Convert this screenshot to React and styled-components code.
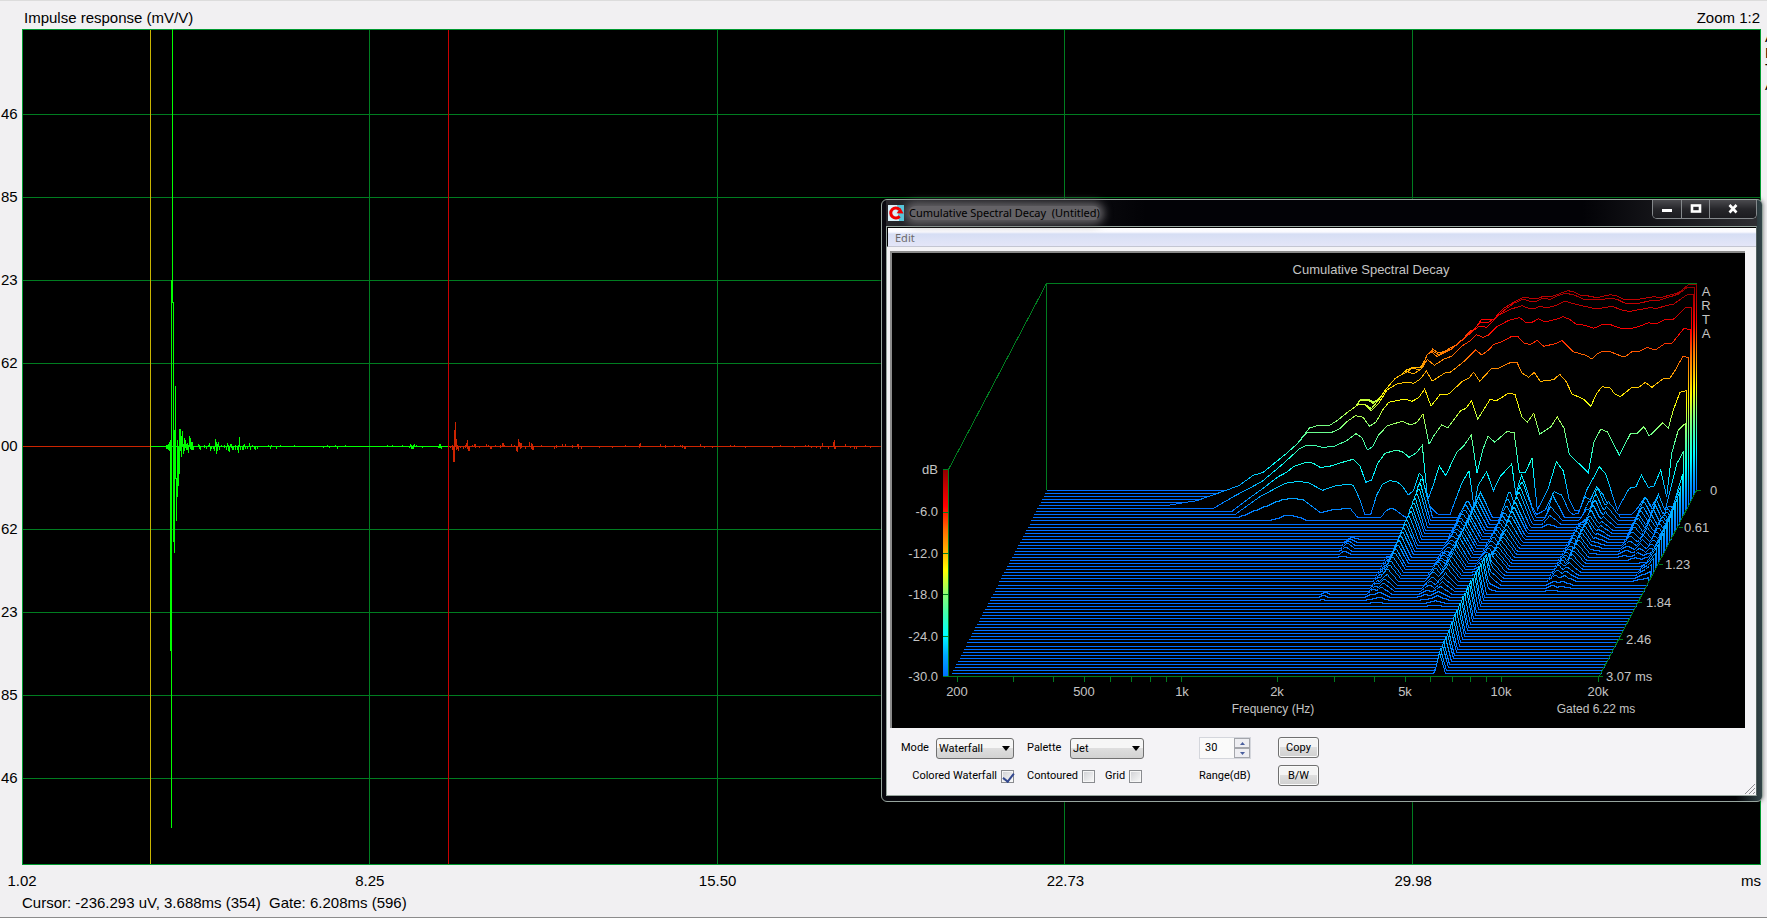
import React from 'react';
import styled, { createGlobalStyle } from 'styled-components';

const GlobalStyle = createGlobalStyle`
  * {
    box-sizing: border-box;
  }
  body {
    margin: 0;
    background-color: #f1f0f2;
    color: #000;
    font-family: "Liberation Sans", Arial, sans-serif;
    font-size: 15px;
    line-height: 18px;
  }
`;

const Page = styled.main`
  position: relative;
  display: grid;
  grid-template-columns: 22px 1fr 6px;
  grid-template-rows: 28px 1fr 26px 26px;
  min-height: 100vh;
  border-top: 1px solid #dcdcdc;
  border-bottom: 1px solid #8c8c8c;
  overflow: hidden;
`;

const Header = styled.header`
  grid-column: 2;
  display: flex;
  justify-content: space-between;
  align-items: center;
  padding: 5px 1px 0 2px;
`;

const LevelAxis = styled.div`
  grid-column: 1;
  grid-row: 2;
  display: flex;
  flex-direction: column;
  padding: 43px 0 46px 1px;
  span {
    flex: 1;
    display: flex;
    align-items: center;
  }
`;

const PlotArea = styled.div`
  grid-column: 2;
  grid-row: 2;
  display: flex;
  background-color: #000;
  svg {
    flex: 1;
    width: 100%;
    height: 100%;
  }
`;

const SideMark = styled.div`
  grid-column: 3;
  grid-row: 2;
  overflow: hidden;
  padding: 0 0 0 4px;
  line-height: 16px;
  span {
    display: block;
  }
`;

const TimeAxis = styled.div`
  grid-column: 2;
  grid-row: 3;
  display: flex;
  justify-content: space-between;
  align-items: center;
  padding-top: 6px;
`;

const TimeTick = styled.span`
  width: 0;
  display: flex;
  justify-content: ${props => props.last ? 'flex-end' : 'center'};
`;

const Status = styled.footer`
  grid-column: 2 / 4;
  grid-row: 4;
  padding-top: 3px;
  white-space: pre;
`;

const Window = styled.section`
  position: absolute;
  top: 198px;
  right: 4px;
  width: 882px;
  padding: 0 5px 5px 4px;
  border: 1px solid #97a59e;
  border-radius: 6px;
  background: linear-gradient(90deg, #08080e 0%, #020206 97%, #34464a 100%);
  box-shadow: 0 0 4px rgba(0, 0, 0, .5);
  font-family: Roboto, "Noto Sans", sans-serif;
  font-size: 11px;
  line-height: 14px;
`;

const TitleBar = styled.header`
  display: flex;
  align-items: flex-start;
  height: 26px;
  background: linear-gradient(90deg, #26262a 0, #020206 260px, #020206 80%, #2e2e32 100%);
`;

const AppIcon = styled.svg`
  position: relative;
  width: 16px;
  height: 16px;
  margin: 5px 0 0 2px;
`;

const WindowTitle = styled.h1`
  margin: 6px auto 0 5px;
  border-radius: 6px;
  background-color: #646266;
  box-shadow: 0 0 8px 4px #646266;
  color: #000;
  font-family: "Noto Sans", "Open Sans", sans-serif;
  font-size: 11px;
  font-weight: 400;
  line-height: 14px;
  white-space: pre;
`;

const Caption = styled.div`
  display: flex;
  height: 19px;
  border: 1px solid #85898c;
  border-top: none;
  border-radius: 0 0 5px 5px;
  overflow: hidden;
`;

const CaptionButton = styled.button`
  width: ${props => props.wide ? '47px' : '28px'};
  padding: 0;
  border: none;
  border-left: ${props => props.first ? 'none' : '1px solid #85898c'};
  background: linear-gradient(#4a4a4e, #26262a 50%, #1c1c20);
  svg {
    display: block;
    margin: 0 auto;
  }
`;

const Client = styled.div`
  border: 1px solid #97a59e;
  border-right-color: #52605e;
  background-color: #f4f3f6;
`;

const MenuBar = styled.nav`
  height: 20px;
  padding: 1px 7px 0;
  border: 1px solid #000;
  border-width: 1px 0 0 1px;
  border-bottom: 1px solid #c4c6d2;
  background: linear-gradient(#fff 0, #fafaff 4px, #d6def4 6px, #e4e6f8 100%);
`;

const MenuButton = styled.button`
  display: block;
  padding: 0;
  border: none;
  background: none;
  color: #6c6a6c;
  font-family: "Noto Sans", "Open Sans", sans-serif;
  font-size: 11px;
  line-height: 18px;
`;

const ChartFrame = styled.div`
  display: flex;
  margin: 4px 11px 0 3px;
  border: 2px solid #8a8a8a;
  border-width: 2px 0 0 2px;
  background-color: #000;
  svg {
    flex: 1;
    min-width: 0;
    height: auto;
  }
`;

const Panel = styled.form`
  display: grid;
  grid-template-columns: 126px 172px 79px 41px;
  grid-auto-rows: 22px;
  row-gap: 6px;
  padding: 9px 14px 8px;
  color: #000;
`;

const Cell = styled.div`
  display: flex;
  align-items: center;
  gap: ${props => props.gap || '4px'};
  width: ${props => props.width || 'auto'};
  justify-content: ${props => props.align || 'flex-start'};
  label {
    white-space: nowrap;
  }
`;

const SelectBox = styled.span`
  position: relative;
  display: block;
  width: ${props => props.width};
  select {
    width: 100%;
    height: 21px;
    padding: 0 2px;
    appearance: none;
    border: 1px solid #707070;
    border-radius: 3px;
    background: linear-gradient(#f6f6f6 45%, #dedede 50%, #d2d2d2);
    color: #000;
    font-family: inherit;
    font-size: 11px;
  }
  svg {
    position: absolute;
    right: 4px;
    top: 8px;
    pointer-events: none;
  }
`;

const CheckBox = styled.input`
  position: relative;
  appearance: none;
  width: 13px;
  height: 13px;
  margin: 0;
  border: 1px solid #8a8c90;
  background: linear-gradient(135deg, #cfd0d4, #fafafa);
  box-shadow: inset 0 0 0 1px #f6f6f6;
  &:checked::after {
    content: '';
    position: absolute;
    left: 3px;
    top: 0;
    width: 5px;
    height: 9px;
    border: solid #32478e;
    border-width: 0 2px 2px 0;
    transform: rotate(38deg);
  }
`;

const Spinner = styled.div`
  display: flex;
  width: 52px;
  height: 22px;
  border: 1px solid #d4d6dc;
  background-color: #fafafa;
  input {
    width: 34px;
    padding: 0 0 2px 5px;
    border: none;
    background: none;
    font-family: inherit;
    font-size: 11px;
  }
`;

const Steps = styled.div`
  display: flex;
  flex-direction: column;
  flex: 1;
  button {
    display: flex;
    flex: 1;
    align-items: center;
    justify-content: center;
    padding: 0;
    border: 1px solid #a4a6ac;
    background-color: #eeeef2;
  }
`;

const PushButton = styled.button`
  width: 41px;
  height: 21px;
  padding: 0;
  border: 1px solid #707070;
  border-radius: 3px;
  background: linear-gradient(#f4f4f4 45%, #dedede 50%, #d0d0d0);
  box-shadow: inset 0 0 0 1px #fafafa;
  color: #000;
  font-family: inherit;
  font-size: 11px;
`;

const Grip = styled.svg`
  position: absolute;
  right: 7px;
  bottom: 7px;
`;

const LEVELS = ['46', '85', '23', '62', '00', '62', '23', '85', '46'];
const TIMES = ['1.02', '8.25', '15.50', '22.73', '29.98', 'ms'];

// impulse samples: column, highest and lowest row
const GATED = [
  [166, 445, 448], [167, 445, 448], [168, 444, 449], [169, 442, 450], [170, 440, 650], [171, 280, 827],
  [172, 29, 302], [173, 302, 541], [174, 430, 552], [175, 386, 478], [176, 478, 520], [177, 440, 496],
  [178, 446, 485], [179, 429, 473], [180, 429, 450], [181, 436, 456], [182, 431, 446], [183, 444, 453],
  [184, 438, 450], [185, 440, 447], [186, 444, 449], [187, 443, 449], [188, 445, 452], [189, 436, 446],
  [190, 438, 448], [191, 442, 449], [192, 442, 449], [193, 446, 449], [198, 444, 446], [199, 445, 448],
  [200, 446, 449], [204, 445, 447], [206, 446, 448], [208, 445, 446], [209, 443, 446], [210, 446, 450],
  [211, 446, 448], [213, 446, 448], [214, 446, 450], [215, 439, 446], [216, 442, 453], [217, 444, 450],
  [218, 442, 446], [219, 446, 449], [221, 445, 446], [224, 445, 447], [226, 446, 449], [227, 443, 446],
  [228, 445, 450], [229, 446, 451], [230, 444, 446], [231, 444, 447], [232, 446, 449], [233, 446, 449],
  [235, 445, 449], [237, 446, 449], [238, 445, 452], [239, 437, 446], [240, 446, 449], [242, 446, 449],
  [243, 445, 449], [244, 444, 446], [245, 446, 448], [247, 446, 448], [249, 443, 446], [250, 446, 449],
  [252, 445, 446], [254, 446, 448], [255, 446, 449], [257, 446, 448], [268, 445, 446], [270, 446, 448],
  [271, 445, 446], [276, 446, 448], [280, 445, 446], [294, 445, 446], [323, 446, 447], [327, 445, 446],
  [329, 446, 447], [335, 445, 446], [337, 446, 448], [345, 445, 446], [387, 445, 446], [392, 445, 446],
  [402, 445, 446], [409, 446, 447], [410, 444, 446], [411, 445, 448], [412, 446, 448], [413, 445, 448],
  [414, 444, 446], [416, 445, 446], [422, 446, 447], [438, 446, 447], [439, 444, 447], [440, 444, 447],
  [441, 446, 448]
];

const TAIL = [
  [450, 446, 447], [452, 445, 449], [453, 446, 461], [454, 430, 461], [455, 422, 446], [456, 439, 449],
  [457, 445, 448], [458, 446, 450], [460, 446, 447], [463, 446, 448], [465, 445, 447], [466, 443, 446],
  [467, 440, 448], [468, 446, 450], [469, 446, 450], [472, 445, 446], [474, 444, 446], [475, 444, 447],
  [479, 446, 447], [486, 444, 446], [488, 445, 446], [490, 446, 448], [491, 446, 448], [495, 445, 446],
  [500, 445, 447], [502, 443, 446], [503, 443, 446], [504, 445, 446], [511, 444, 446], [514, 445, 446],
  [516, 446, 450], [517, 446, 451], [518, 439, 446], [519, 442, 446], [520, 443, 448], [521, 443, 447],
  [525, 446, 448], [529, 442, 446], [531, 443, 448], [532, 444, 449], [533, 446, 449], [541, 445, 446],
  [554, 446, 448], [556, 445, 447], [562, 444, 446], [565, 444, 446], [572, 445, 447], [577, 444, 446],
  [578, 444, 448], [581, 446, 448], [599, 446, 447], [612, 446, 447], [625, 445, 446], [639, 444, 447],
  [640, 443, 446], [660, 444, 446], [665, 445, 447], [674, 445, 446], [680, 445, 446], [682, 445, 447],
  [684, 446, 448], [685, 446, 448], [700, 444, 446], [704, 446, 447], [712, 446, 447], [730, 445, 446],
  [734, 445, 446], [745, 446, 447], [772, 446, 447], [780, 445, 446], [794, 446, 447], [805, 445, 446],
  [808, 445, 446], [811, 446, 447], [816, 446, 447], [820, 446, 448], [822, 443, 446], [828, 446, 448],
  [833, 442, 446], [834, 440, 448], [835, 446, 448], [845, 444, 446], [850, 446, 447], [854, 446, 448],
  [856, 446, 448], [865, 445, 446], [870, 446, 447]
];

const bars = (samples) =>
  samples.map(([x, top, bottom]) => `M${x + 0.5} ${top}V${bottom + 1}`).join('');

function ImpulsePlot() {
  return (
    <svg viewBox="22 29 1739 836" preserveAspectRatio="none" shapeRendering="crispEdges" role="img" aria-label="Impulse response">
      <g stroke="#007d20" fill="none">
        {[114, 197, 280, 363, 446, 529, 612, 695, 778].map((y) => <path key={y} d={`M22 ${y + 0.5}H1761`}/>)}
        {[369, 717, 1064, 1412].map((x) => <path key={x} d={`M${x + 0.5} 29V865`}/>)}
        <path d="M22.5 29.5H1760.5V864.5H22.5Z" stroke="#009a30"/>
      </g>
      <path d="M150.5 30V864" stroke="#c8b400"/>
      <path d="M448.5 30V864" stroke="#c80000"/>
      <path d={'M23 446.5H150M449 446.5H1760' + bars(TAIL)} stroke="#cc2400"/>
      <path d={'M151 446.5H448' + bars(GATED)} stroke="#00ff00"/>
    </svg>
  );
}

// waterfall geometry
const SLICES = 61;
const LEFT = 1046;
const SPAN = 650;
const FLOOR = 490;
const HEIGHT = 207;
const SHIFT_X = 97 / SLICES;
const SHIFT_Y = 186 / SLICES;

const RISE = [
  [-270, 901], [-235, 887], [-191, 856], [-161, 847], [-126, 818], [-91, 790], [-58, 760], [-41, 738],
  [-23, 714], [0, 707], [38, 706], [60, 695], [85, 680], [100, 668]
];

// the first slices, traced in thirds of a pixel from (1317, 190)
const TRACES = [
  [...RISE, [115, 650], [130, 629], [152, 627], [170, 636], [185, 628], [200, 608], [225, 577], [245, 560],
    [270, 539], [290, 531], [305, 534], [318, 522], [330, 497], [347, 477], [362, 488], [380, 485], [400, 474],
    [420, 463], [440, 445], [458, 424], [473, 418], [492, 390], [530, 389], [545, 370], [560, 355], [590, 337],
    [620, 321], [640, 325], [665, 325], [680, 318], [700, 321], [720, 314], [735, 308], [752, 302], [770, 305],
    [790, 316], [810, 317], [840, 323], [865, 317], [880, 314], [900, 318], [920, 328], [965, 328], [1000, 322],
    [1010, 320], [1030, 323], [1060, 315], [1085, 308], [1100, 296], [1115, 283]],
  [...RISE, [115, 650], [130, 629], [152, 628], [170, 637], [190, 625], [220, 583], [250, 560], [285, 535], [310, 533],
    [328, 503], [345, 482], [365, 494], [400, 478], [420, 465], [455, 430], [470, 420], [490, 397], [515, 397],
    [530, 387], [560, 362], [590, 340], [618, 328], [640, 334], [655, 336], [675, 325], [700, 328], [720, 318],
    [745, 310], [770, 314], [800, 328], [845, 330], [880, 325], [900, 328], [925, 340], [965, 340], [1000, 332],
    [1030, 330], [1060, 320], [1085, 312], [1110, 293]],
  [...RISE, [115, 650], [130, 632], [150, 630], [168, 640], [180, 632], [220, 585], [250, 562], [285, 535], [312, 540],
    [330, 495], [342, 485], [360, 499], [400, 480], [440, 447], [465, 425], [487, 408], [510, 412], [545, 375],
    [580, 358], [615, 347], [635, 355], [655, 355], [667, 349], [690, 353], [715, 347], [745, 333], [765, 340],
    [795, 347], [838, 357], [885, 349], [920, 362], [940, 364], [998, 353], [1020, 355], [1055, 345], [1070, 342],
    [1112, 313]],
  [...RISE, [125, 643], [145, 643], [163, 656], [185, 630], [205, 600], [235, 565], [270, 545], [290, 552],
    [315, 535], [331, 508], [352, 526], [380, 508], [405, 498], [435, 468], [460, 452], [478, 434], [498, 442],
    [515, 435], [540, 410], [575, 391], [608, 383], [625, 396], [645, 397], [665, 386], [685, 396], [718, 388],
    [738, 380], [758, 388], [778, 403], [805, 406], [830, 415], [860, 402], [875, 402], [908, 414], [945, 415],
    [970, 408], [995, 398], [1017, 402], [1040, 390], [1070, 387], [1105, 353]],
  [...RISE.slice(0, 9), [0, 707], [38, 706], [60, 692], [90, 668], [125, 643], [145, 645], [163, 662], [185, 640],
    [210, 600], [240, 582], [270, 576], [290, 580], [310, 567], [328, 543], [346, 573], [385, 548], [400, 547],
    [440, 515], [476, 479], [494, 495], [515, 480], [530, 463], [550, 457], [585, 439], [603, 440], [620, 459],
    [640, 464], [660, 451], [680, 469], [715, 461], [735, 452], [770, 486], [805, 495], [825, 507], [843, 490],
    [860, 483], [880, 485], [912, 498], [928, 498], [945, 485], [965, 485], [990, 472], [1015, 480], [1045, 460],
    [1065, 460], [1100, 416]],
  [[-451, 947], [-411, 940], [-361, 932], [-276, 902], [-235, 887], [-191, 856], [-161, 847], [-126, 818],
    [-91, 790], [-58, 760], [-41, 740], [-30, 727], [45, 727], [70, 715], [90, 695], [115, 677], [138, 682],
    [158, 709], [178, 695], [197, 660], [215, 637], [265, 627], [285, 634], [305, 623], [323, 597], [342, 648],
    [370, 613], [395, 612], [435, 575], [455, 565], [470, 547], [488, 574], [523, 536], [545, 534], [582, 517],
    [600, 517], [615, 549], [635, 562], [652, 547], [670, 574], [710, 569], [728, 553], [748, 575], [765, 612],
    [800, 628], [822, 649], [838, 612], [855, 590], [880, 594], [893, 612], [910, 620], [945, 592], [965, 592],
    [985, 577], [1005, 592], [1040, 565], [1058, 566], [1075, 540], [1097, 500]],
  [[-311, 957], [-251, 920], [-166, 875], [-106, 825], [-51, 775], [-31, 766], [-11, 765], [14, 772], [49, 770],
    [89, 752], [117, 731], [135, 743], [151, 780], [167, 770], [185, 735], [210, 708], [255, 694], [282, 705],
    [300, 697], [318, 672], [336, 763], [352, 735], [374, 705], [392, 714], [430, 663], [447, 655], [464, 632],
    [482, 688], [520, 627], [537, 633], [574, 610], [594, 613], [614, 680], [631, 697], [650, 670], [668, 733],
    [702, 710], [721, 680], [741, 715], [757, 793], [814, 848], [831, 755], [851, 718], [871, 725], [907, 795],
    [941, 730], [961, 730], [981, 710], [997, 738], [1037, 698], [1054, 715], [1069, 660], [1089, 607]],
  [[-256, 966], [-211, 930], [-166, 898], [-116, 860], [-91, 847], [-71, 830], [-31, 816], [-11, 820], [9, 832],
    [34, 830], [89, 813], [109, 808], [129, 827], [146, 877], [164, 870], [182, 820], [204, 790], [239, 780],
    [259, 787], [276, 802], [299, 788], [316, 766], [332, 930], [349, 885], [367, 827], [386, 857], [419, 787],
    [440, 768], [463, 735], [480, 848], [497, 780], [513, 738], [533, 757], [569, 725], [591, 727], [607, 847],
    [625, 847], [645, 805], [661, 960], [694, 895], [718, 815], [739, 843], [757, 930], [774, 963], [787, 962],
    [809, 900], [831, 860], [847, 830], [866, 852], [901, 960], [917, 930], [937, 895], [957, 890], [973, 855],
    [994, 892], [1011, 888], [1031, 840], [1049, 920], [1064, 790], [1084, 720]],
  [[-246, 974], [-171, 920], [-96, 880], [-56, 874], [-26, 878], [17, 901], [54, 888], [99, 882], [110, 888],
    [129, 930], [144, 974], [161, 974], [179, 915], [197, 882], [217, 872], [239, 875], [256, 888], [274, 915],
    [289, 902], [307, 850], [317, 860], [329, 940], [344, 955], [364, 974], [399, 974], [434, 880], [456, 842],
    [471, 950], [484, 885], [509, 845], [529, 903], [549, 860], [584, 822], [597, 915], [606, 880], [614, 855],
    [630, 900], [645, 950], [659, 974], [685, 960], [711, 905], [734, 915], [757, 965], [769, 974], [784, 970],
    [804, 920], [820, 930], [839, 890], [859, 915], [879, 960], [899, 974], [944, 974], [965, 950], [984, 920],
    [1004, 950], [1024, 915], [1044, 965], [1062, 890], [1080, 820]]
];
const EDGE = [283, 292, 313, 354, 418, 502, 602, 700, 785];

// ridges: centre, foot to the left, foot to the right, [slice, height] keys
const RIDGES = [
  [389, 10, 11, [[9, 42], [14, 33], [21, 24], [30, 13], [35, 6], [37, 1], [38, 0]]],
  [381, 7, 6, [[21, 0], [23, 5], [30, 5], [34, 6], [36, 1], [37, 0]]],
  [331, 6, 7, [[15, 0], [17, 4], [19, 6], [21, 3], [22, 1], [23, 0]]],
  [333, 4, 5, [[33, 0], [34, 3], [36, 1], [37, 0]]],
  [435, 9, 9, [[9, 18], [14, 13], [22, 7], [28, 12], [33, 7], [36, 1], [37, 0]]],
  [448, 12, 12, [[9, 25], [14, 21], [22, 20], [30, 14], [34, 8], [38, 1], [39, 0]]],
  [488, 5, 6, [[26, 16], [29, 24], [31, 30], [42, 32], [50, 28], [60, 21]]],
  [489, 10, 14, [[9, 38], [11, 34], [14, 28], [20, 19], [26, 17], [31, 12], [34, 0]]],
  [477, 9, 9, [[9, 28], [12, 16], [18, 13], [24, 8], [29, 0]]],
  [520, 7, 12, [[9, 23], [10, 14], [11, 9], [12, 3], [13, 0]]],
  [565, 9, 12, [[9, 31], [14, 19], [20, 16], [26, 12], [30, 6], [33, 0]]],
  [557, 8, 8, [[9, 18], [11, 6], [16, 13], [22, 9], [28, 11], [32, 3], [34, 0]]],
  [576, 10, 12, [[9, 16], [13, 9], [18, 4], [22, 0]]],
  [613, 9, 11, [[9, 21], [14, 16], [18, 10], [21, 4], [23, 0]]],
  [626, 8, 9, [[9, 23], [14, 14], [20, 8], [23, 3], [24, 0]]],
  [637, 8, 9, [[9, 12], [14, 15], [20, 8], [23, 3], [25, 0]]],
  [651, 14, 1, [[9, 46], [10, 37], [12, 31], [18, 25], [25, 20], [28, 12], [30, 4], [31, 0]]],
  [643, 9, 8, [[23, 0], [26, 8], [29, 5], [31, 0]]]
];

const BUMPS = {
  9: [[206, 0], [233, 11], [250, 18], [261, 19], [270, 18], [288, 5], [301, 8], [318, 9], [325, 0], [348, 0],
    [355, 8], [361, 9], [370, 2], [374, 0]],
  10: [[238, 0], [247, 2], [254, 5], [262, 5], [269, 3], [276, 0]]
};

function interpolate(keys, at) {
  if (at < keys[0][0] || at > keys[keys.length - 1][0]) {
    return 0;
  }
  for (let k = 1; k < keys.length; k++) {
    const [x0, y0] = keys[k - 1];
    const [x1, y1] = keys[k];
    if (at <= x1) {
      return y0 + (y1 - y0) * (at - x0) / (x1 - x0);
    }
  }
  return 0;
}

function heightAt(slice, u) {
  let h = BUMPS[slice] ? interpolate(BUMPS[slice], u) : 0;
  RIDGES.forEach(([centre, before, after, keys]) => {
    const peak = interpolate(keys, slice);
    const d = u - centre;
    const fall = d < 0 ? 1 + d / before : 1 - d / after;
    h = Math.max(h, peak * fall);
  });
  return h;
}

function slicePath(i) {
  const left = Math.round(LEFT - i * SHIFT_X) + 0.5;
  const right = left + SPAN;
  const floor = Math.round(FLOOR + i * SHIFT_Y) + 0.5;
  const points = [[left, floor]];

  if (TRACES[i]) {
    const start = 1317 + TRACES[i][0][0] / 3;
    points.push([start, floor]);
    TRACES[i].forEach(([x, y]) => points.push([1317 + x / 3, Math.min(floor, 190 + y / 3)]));
    points.push([right, 190 + EDGE[i] / 3]);
  } else {
    for (let u = 200; u <= SPAN; u += 2) {
      points.push([left + u, floor - Math.round(heightAt(i, u))]);
    }
  }
  points.push([right, floor]);
  return 'M' + points.map(([x, y]) => `${x.toFixed(1)} ${y.toFixed(1)}`).join('L');
}

const JET = [
  [0, '#8c0000'], [0.1, '#d00000'], [0.18, '#ff0000'], [0.3, '#ff7000'], [0.4, '#ffb400'],
  [0.49, '#ffff00'], [0.6, '#90ff70'], [0.7, '#40ffb0'], [0.8, '#00ffff'], [0.9, '#00a8ff'], [1, '#0070ff']
];

function JetStops() {
  return JET.map(([offset, color]) => <stop key={offset} offset={offset} stopColor={color}/>);
}

const FREQ_TICKS = [957, 1013, 1053, 1084, 1110, 1131, 1150, 1166, 1181, 1277, 1334, 1374, 1405, 1430, 1452, 1470, 1486, 1501, 1598];
const FREQ_LABELS = [[957, '200'], [1084, '500'], [1182, '1k'], [1277, '2k'], [1405, '5k'], [1501, '10k'], [1598, '20k']];
const DB_LABELS = [[474, 'dB'], [516, '-6.0'], [558, '-12.0'], [599, '-18.0'], [641, '-24.0'], [681, '-30.0']];
const MS_LABELS = [
  [1710, 495, '0'], [1684, 532, '0.61'], [1665, 569, '1.23'], [1646, 607, '1.84'], [1626, 644, '2.46'], [1606, 681, '3.07 ms']
];

function Waterfall() {
  const slices = Array.from({ length: SLICES }, (_, i) => i);

  return (
    <svg viewBox="892 253 853 475" role="img" aria-label="Cumulative Spectral Decay">
      <defs>
        <linearGradient id="bar" x1="0" y1="0" x2="0" y2="1"><JetStops/></linearGradient>
        {slices.map((i) => (
          <linearGradient
            key={i}
            id={`jet${i}`}
            gradientUnits="userSpaceOnUse"
            x1="0"
            x2="0"
            y1={FLOOR + i * SHIFT_Y - HEIGHT}
            y2={FLOOR + i * SHIFT_Y}
          >
            <JetStops/>
          </linearGradient>
        ))}
      </defs>
      <g shapeRendering="crispEdges">
        <path d="M948.5 469.5L1046.5 283.5H1696.5V490.5M1046.5 283.5V490" fill="none" stroke="#007d20"/>
        {slices.map((i) => <path key={i} d={slicePath(i)} fill="#000" stroke={`url(#jet${i})`}/>)}
        <rect x="943" y="469" width="5" height="207" fill="url(#bar)"/>
        <path
          d="M943 469.5H948.5V676.5M943 512.5H948M943 553.5H948M943 594.5H948M943 636.5H948M943 676.5H1603M1599.5 676L1696.5 490.5M1696 490.5H1701M1679 527.5H1683M1659 564.5H1663M1638 602.5H1642M1619 639.5H1623"
          fill="none"
          stroke="#007d20"
        />
        {FREQ_TICKS.map((x) => <path key={x} d={`M${x + 0.5} 677V682`} stroke="#007d20"/>)}
      </g>
      <g fill="#c4c4c4" fontFamily='"Liberation Sans", Arial, sans-serif' fontSize="13">
        <text x="1371" y="274" textAnchor="middle">Cumulative Spectral Decay</text>
        {['A', 'R', 'T', 'A'].map((letter, i) => (
          <text key={i} x="1706" y={296 + i * 14} textAnchor="middle">{letter}</text>
        ))}
        {DB_LABELS.map(([y, label]) => <text key={label} x="938" y={y} textAnchor="end">{label}</text>)}
        {MS_LABELS.map(([x, y, label]) => <text key={label} x={x} y={y}>{label}</text>)}
        {FREQ_LABELS.map(([x, label]) => <text key={label} x={x} y="696" textAnchor="middle">{label}</text>)}
        <text x="1273" y="713" textAnchor="middle" fontSize="12">Frequency (Hz)</text>
        <text x="1596" y="713" textAnchor="middle" fontSize="12">Gated 6.22 ms</text>
      </g>
    </svg>
  );
}

function Select(props) {
  return (
    <SelectBox width={props.width}>
      <select id={props.id} defaultValue={props.options[0]}>
        {props.options.map((option) => <option key={option}>{option}</option>)}
      </select>
      <svg width="8" height="5" viewBox="0 0 8 5"><path d="M0 0H8L4 5Z" fill="#000"/></svg>
    </SelectBox>
  );
}

function Controls() {
  return (
    <Panel>
      <Cell width="113px" align="space-between">
        <label htmlFor="mode">Mode</label>
        <Select id="mode" width="78px" options={['Waterfall', 'Sonogram']}/>
      </Cell>
      <Cell width="117px" align="space-between">
        <label htmlFor="palette">Palette</label>
        <Select id="palette" width="74px" options={['Jet', 'Hot', 'Gray']}/>
      </Cell>
      <Spinner>
        <input id="range" type="text" defaultValue="30"/>
        <Steps>
          <button type="button" aria-label="Increase range">
            <svg width="5" height="3" viewBox="0 0 5 3"><path d="M0 3L2.5 0L5 3Z" fill="#4a5f9e"/></svg>
          </button>
          <button type="button" aria-label="Decrease range">
            <svg width="5" height="3" viewBox="0 0 5 3"><path d="M0 0L2.5 3L5 0Z" fill="#4a5f9e"/></svg>
          </button>
        </Steps>
      </Spinner>
      <PushButton type="button">Copy</PushButton>

      <Cell width="113px" align="flex-end">
        <label htmlFor="colored">Colored Waterfall</label>
        <CheckBox id="colored" type="checkbox" defaultChecked/>
      </Cell>
      <Cell gap="10px">
        <Cell>
          <label htmlFor="contoured">Contoured</label>
          <CheckBox id="contoured" type="checkbox"/>
        </Cell>
        <Cell>
          <label htmlFor="grid">Grid</label>
          <CheckBox id="grid" type="checkbox"/>
        </Cell>
      </Cell>
      <Cell><label htmlFor="range">Range(dB)</label></Cell>
      <PushButton type="button">B/W</PushButton>
    </Panel>
  );
}

function DecayWindow() {
  return (
    <Window>
      <TitleBar>
        <AppIcon viewBox="0 0 16 16">
          <rect width="16" height="16" fill="#d8f0f8"/>
          <path d="M9 0H16V16H11Z" fill="#58c4d8"/>
          <path d="M11.6 11.2A5 5 0 1 1 11.4 4.6" fill="none" stroke="#f00000" strokeWidth="3"/>
          <path d="M8.6 8.2L15.6 8.6L12.4 3Z" fill="#f00000"/>
        </AppIcon>
        <WindowTitle>Cumulative Spectral Decay  (Untitled)</WindowTitle>
        <Caption>
          <CaptionButton first aria-label="Minimize">
            <svg width="12" height="12" viewBox="0 0 12 12"><rect x="1" y="6" width="10" height="3" fill="#fff"/></svg>
          </CaptionButton>
          <CaptionButton aria-label="Maximize">
            <svg width="12" height="12" viewBox="0 0 12 12"><rect x="2" y="2.5" width="8" height="6" fill="none" stroke="#fff" strokeWidth="2.6"/></svg>
          </CaptionButton>
          <CaptionButton wide aria-label="Close">
            <svg width="12" height="12" viewBox="0 0 12 12"><path d="M2.5 2L9.5 9.5M9.5 2L2.5 9.5" stroke="#fff" strokeWidth="2.6"/></svg>
          </CaptionButton>
        </Caption>
      </TitleBar>
      <Client>
        <MenuBar><MenuButton>Edit</MenuButton></MenuBar>
        <ChartFrame><Waterfall/></ChartFrame>
        <Controls/>
      </Client>
      <Grip width="10" height="10" viewBox="0 0 10 10">
        <path d="M0 10L10 0M4 10L10 4M8 10L10 8" stroke="#8c8c90"/>
      </Grip>
    </Window>
  );
}

function App() {
  return (
    <>
      <GlobalStyle/>
      <Page>
        <Header>
          <span>Impulse response (mV/V)</span>
          <span>Zoom 1:2</span>
        </Header>
        <LevelAxis>
          {LEVELS.map((level, i) => <span key={i}>{level}</span>)}
        </LevelAxis>
        <PlotArea><ImpulsePlot/></PlotArea>
        <SideMark>
          <span>A</span><span>R</span><span>T</span><span>A</span>
        </SideMark>
        <TimeAxis>
          {TIMES.map((time) => <TimeTick key={time} last={time === 'ms'}>{time}</TimeTick>)}
        </TimeAxis>
        <Status>Cursor: -236.293 uV, 3.688ms (354)  Gate: 6.208ms (596)</Status>
        <DecayWindow/>
      </Page>
    </>
  );
}

export default App;
